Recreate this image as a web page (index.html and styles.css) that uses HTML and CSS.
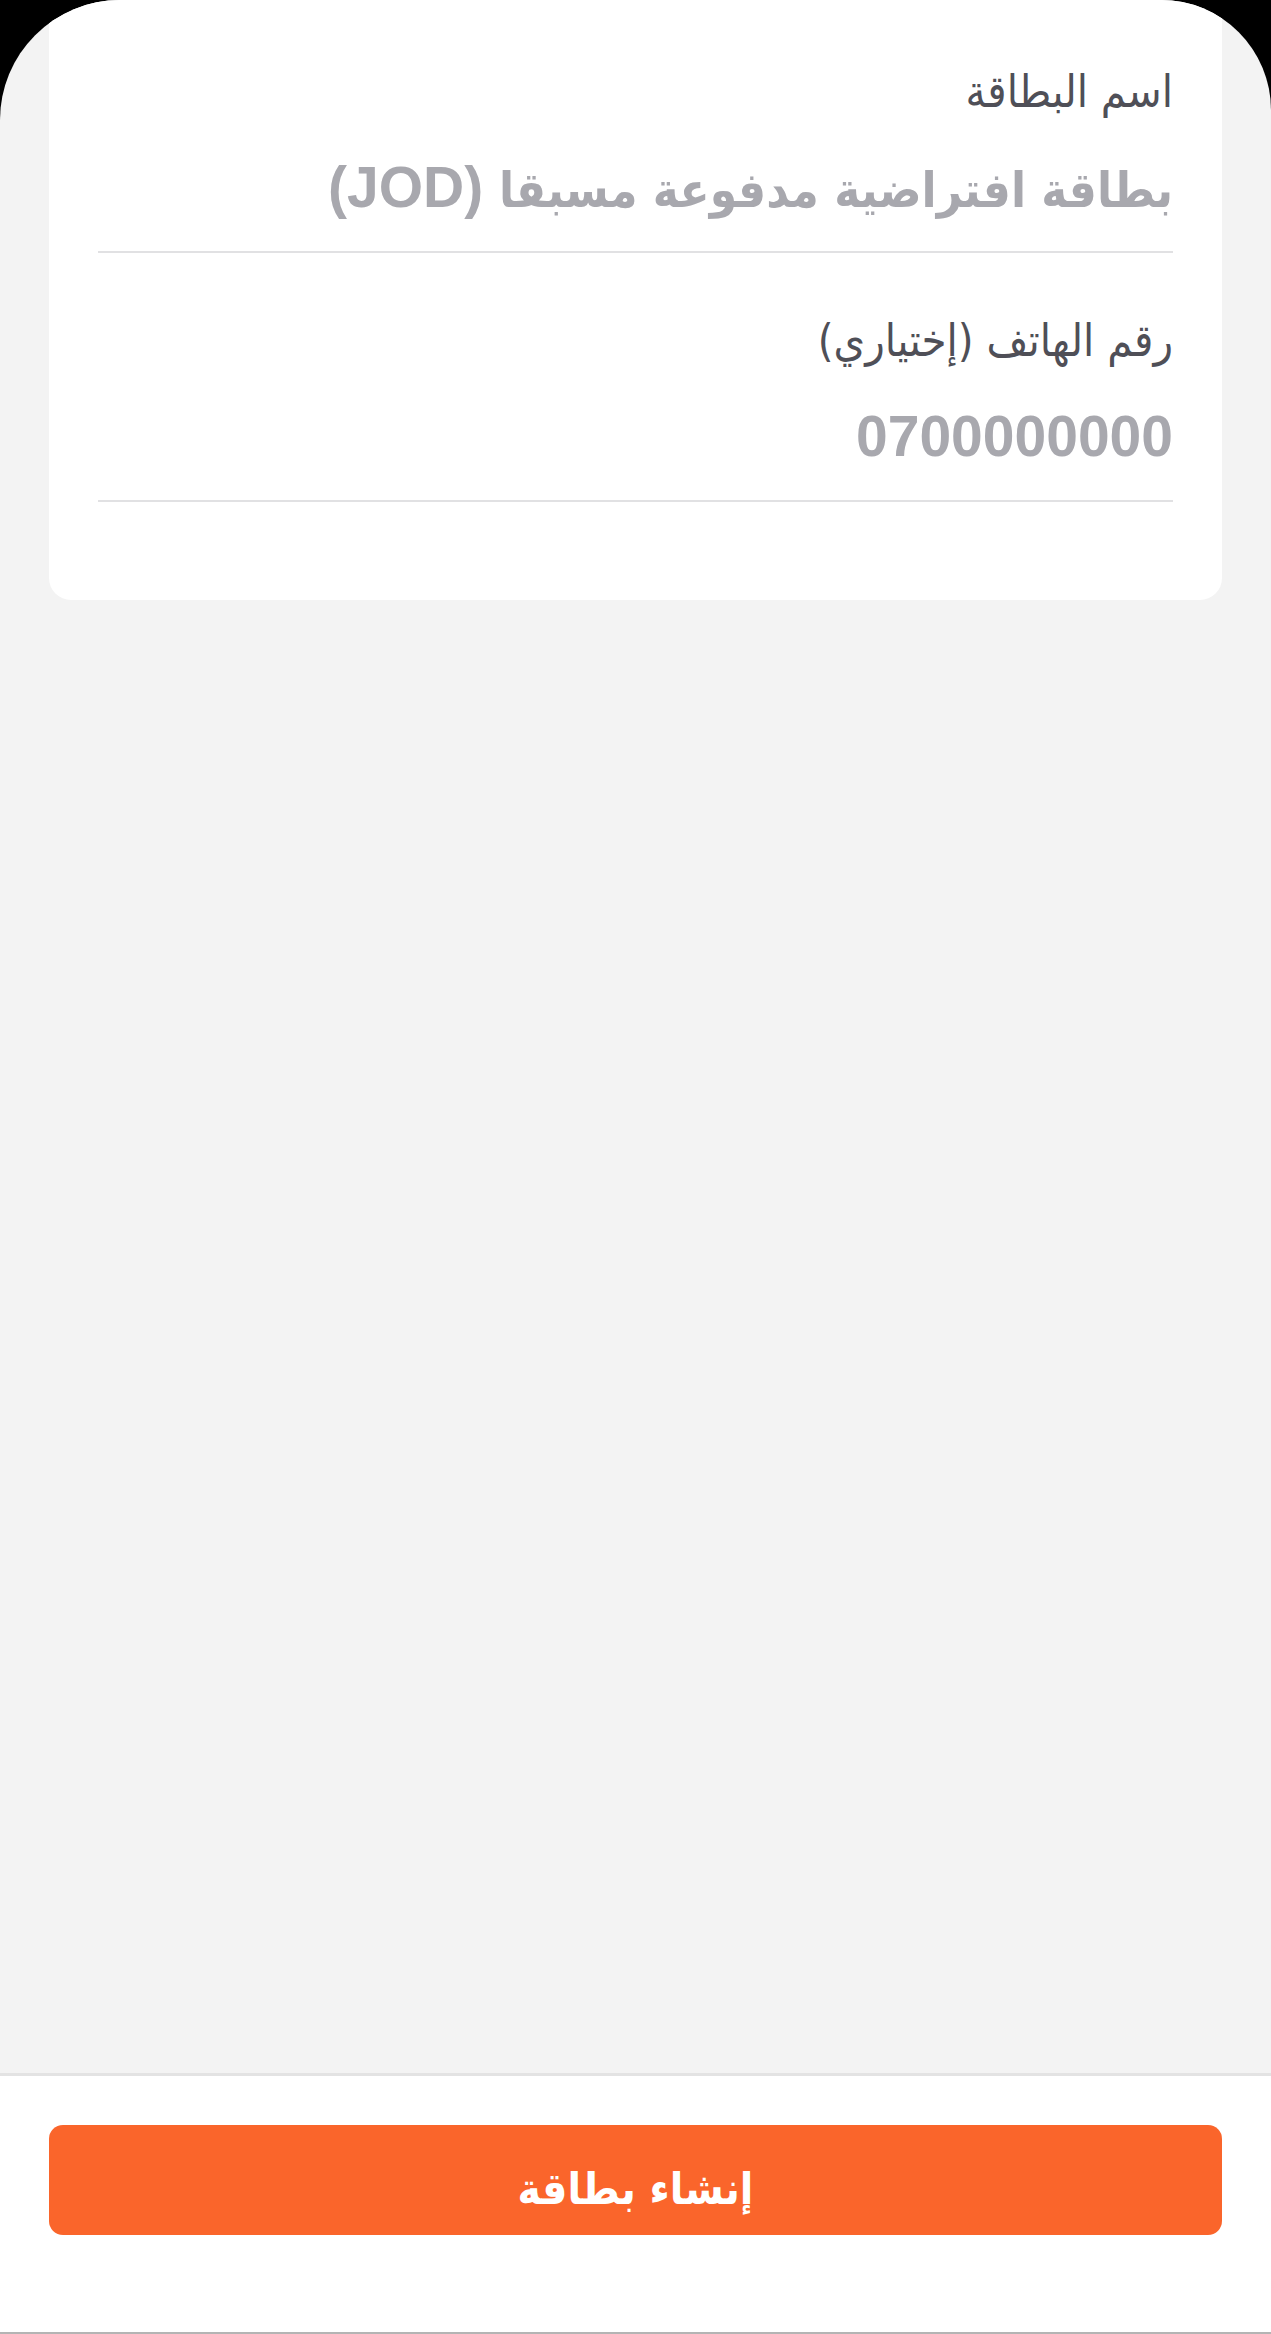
FILE: index.html
```html
<!DOCTYPE html>
<html lang="ar" dir="rtl">
<head>
    <meta charset="utf-8">
    <title>إنشاء بطاقة</title>
    <link rel="stylesheet" href="styles.css">
</head>
<body>
    <div class="screen">
        <!-- Card details -->
        <main class="content">
            <div class="card">
                <div class="field">
                    <label class="field-label">اسم البطاقة</label>
                    <div class="field-value"><span class="ar">بطاقة افتراضية مدفوعة مسبقا</span> (JOD)</div>
                </div>
                <div class="field">
                    <label class="field-label">رقم الهاتف (إختياري)</label>
                    <div class="field-value">0700000000</div>
                </div>
            </div>
        </main>

        <!-- Bottom action -->
        <footer class="footer">
            <button class="primary-btn">إنشاء بطاقة</button>
        </footer>
    </div>
</body>
</html>
```

FILE: styles.css
```css
html, body {
    margin: 0;
    height: 100%;
}
body {
    background-color: #000;
    font-family: "Liberation Sans", "DejaVu Sans", sans-serif;
}
.screen {
    height: 2334px;
    display: flex;
    flex-direction: column;
    background: #f3f3f3;
    border-radius: 120px 110px 0 0;
    overflow: hidden;
    border-bottom: 2px solid #b4b4b4;
    box-sizing: border-box;
}
.content {
    flex: 1;
}
.card {
    margin: 0 49px;
    padding: 70px 49px 98px;
    background: #fff;
    border-radius: 0 0 22px 22px;
}
.field + .field {
    margin-top: 66px;
}
.field-label {
    display: block;
    font-family: "DejaVu Sans", sans-serif;
    font-stretch: condensed;
    font-size: 45px;
    line-height: 44px;
    color: #4f4f57;
}
.field-value {
    height: 70px;
    margin-top: 38px;
    padding-bottom: 29px;
    border-bottom: 2px solid #e1e1e3;
    font-size: 57px;
    line-height: 70px;
    font-weight: bold;
    color: #a8a8ae;
}
.ar {
    font-family: "DejaVu Sans", sans-serif;
    font-stretch: condensed;
    font-size: 49px;
    line-height: 1;
}
.footer {
    background: #fff;
    border-top: 3px solid #e3e3e3;
    padding: 49px 49px 97px;
}
.primary-btn {
    display: block;
    width: 100%;
    height: 110px;
    padding: 16px 0 0;
    border: none;
    border-radius: 14px;
    background-color: #fa652b;
    color: #fff;
    font-family: "DejaVu Sans", sans-serif;
    font-stretch: condensed;
    font-size: 44px;
    font-weight: bold;
    cursor: pointer;
}
```
